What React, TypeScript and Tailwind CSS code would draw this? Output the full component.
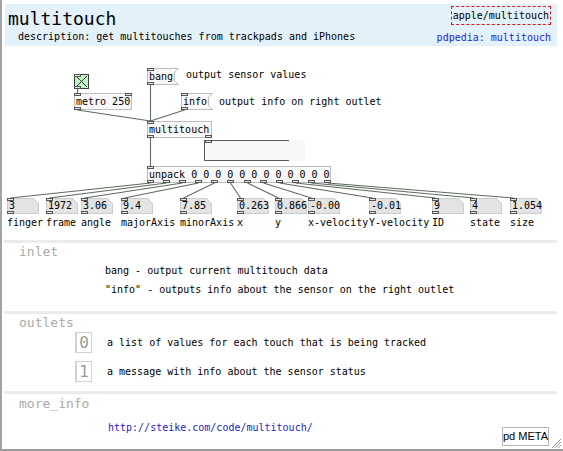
import React from "react";

const OY = 46;

type Kind = "obj" | "msg" | "atom" | "tgl";
type PdNode = {
  id: string;
  kind: Kind;
  x: number;
  y: number;
  w: number;
  h: number;
  text?: string;
  ins: number;
  outs: number;
};

const atomXs = [7, 46, 81, 121, 180, 237, 275, 308, 369, 432, 470, 510];
const atomVals = ["3", "1972", "3.06", "9.4", "7.85", "0.263", "0.866", "-0.00", "-0.01", "9", "4", "1.054"];
const atomLabels = [
  "finger",
  "frame",
  "angle",
  "majorAxis",
  "minorAxis",
  "x",
  "y",
  "x-velocity",
  "Y-velocity",
  "ID",
  "state",
  "size",
];

const nodes: PdNode[] = [
  { id: "tgl", kind: "tgl", x: 74, y: 74, w: 15, h: 15, ins: 1, outs: 1 },
  { id: "bang", kind: "msg", x: 147, y: 68, w: 32, h: 17, text: "bang", ins: 1, outs: 1 },
  { id: "metro", kind: "obj", x: 74, y: 93, w: 58, h: 17, text: "metro 250", ins: 2, outs: 1 },
  { id: "info", kind: "msg", x: 181, y: 93, w: 32, h: 17, text: "info", ins: 1, outs: 1 },
  { id: "mt", kind: "obj", x: 147, y: 121, w: 65, h: 17, text: "multitouch", ins: 1, outs: 2 },
  {
    id: "unpack",
    kind: "obj",
    x: 147,
    y: 166,
    w: 184,
    h: 17,
    text: "unpack 0 0 0 0 0 0 0 0 0 0 0 0",
    ins: 1,
    outs: 12,
  },
  ...atomXs.map((x, i) => ({
    id: `atom${i}`,
    kind: "atom" as Kind,
    x,
    y: 198,
    w: 32,
    h: 16,
    text: atomVals[i],
    ins: 1,
    outs: 1,
  })),
];

const byId = Object.fromEntries(nodes.map((n) => [n.id, n]));

const wires: [string, number, string, number][] = [
  ["tgl", 0, "metro", 0],
  ["metro", 0, "mt", 0],
  ["bang", 0, "mt", 0],
  ["info", 0, "mt", 0],
  ["mt", 0, "unpack", 0],
  ...atomXs.map((_, i) => ["unpack", i, `atom${i}`, 0] as [string, number, string, number]),
];

function portX(n: PdNode, i: number, count: number) {
  if (count <= 1) return n.x;
  return n.x + Math.round((i * (n.w - 7)) / (count - 1));
}

function boxShape(n: PdNode) {
  const { x, y, w, h } = n;
  const x2 = x + w - 0.5;
  const y2 = y + h - 0.5;
  const x1 = x + 0.5;
  const y1 = y + 0.5;
  if (n.kind === "msg") {
    return (
      <polygon
        key={n.id}
        points={`${x1},${y1} ${x2},${y1} ${x2 - 4},${y1 + 4} ${x2 - 4},${y2 - 4} ${x2},${y2} ${x1},${y2}`}
        fill="#f8f8f8"
        stroke="#bdbdbd"
      />
    );
  }
  if (n.kind === "atom") {
    return (
      <polygon
        key={n.id}
        points={`${x1},${y1} ${x2 - 5},${y1} ${x2},${y1 + 5} ${x2},${y2} ${x1},${y2}`}
        fill="#e3e3e3"
        stroke="#cdcdcd"
      />
    );
  }
  if (n.kind === "tgl") {
    return (
      <g key={n.id}>
        <rect x={x1} y={y1} width={w - 1} height={h - 1} fill="#c2f2c2" stroke="#3c3c3c" />
        <path
          d={`M${x + 2} ${y + 2} L${x + w - 2} ${y + h - 2} M${x + w - 2} ${y + 2} L${x + 2} ${y + h - 2}`}
          stroke="#2a3a2a"
          strokeWidth={1.2}
        />
      </g>
    );
  }
  return <rect key={n.id} x={x1} y={y1} width={w - 1} height={h - 1} fill="#f8f8f8" stroke="#bdbdbd" />;
}

function ports(n: PdNode) {
  const out: React.ReactNode[] = [];
  for (let i = 0; i < n.ins; i++) {
    out.push(
      <rect key={`${n.id}-i${i}`} x={portX(n, i, n.ins) + 0.5} y={n.y + 0.5} width={6} height={2} fill="#e6e6e6" stroke="#555" />
    );
  }
  for (let i = 0; i < n.outs; i++) {
    out.push(
      <rect
        key={`${n.id}-o${i}`}
        x={portX(n, i, n.outs) + 0.5}
        y={n.y + n.h - 2.5}
        width={6}
        height={2}
        fill="#e6e6e6"
        stroke="#555"
      />
    );
  }
  return out;
}

function Patch() {
  return (
    <div className="relative h-[194px]">
      <svg className="absolute left-0 top-0" width={563} height={194} viewBox={`0 ${OY} 563 194`}>
        <g stroke="#5d6b5d" strokeWidth={1.1} fill="none">
          {wires.map(([a, ai, b, bi], k) => {
            const from = byId[a];
            const to = byId[b];
            const x1 = portX(from, ai, from.outs) + 3.5;
            const y1 = from.y + from.h;
            const x2 = portX(to, bi, to.ins) + 3.5;
            const y2 = to.y;
            return <line key={k} x1={x1} y1={y1} x2={x2} y2={y2} />;
          })}
        </g>
        <g shapeRendering="crispEdges">
          {nodes.map((n) => boxShape(n))}
          <rect x={204} y={140} width={101} height={21} fill="#f8f8f8" />
          <path d="M289 140.5 H204.5 V160.5 H289" stroke="#5a5a5a" fill="none" />
          <rect x={205.5} y={140.5} width={6} height={2} fill="#e6e6e6" stroke="#555" />
          {nodes.map((n) => ports(n))}
        </g>
      </svg>

      {nodes
        .filter((n) => n.text)
        .map((n) => (
          <div
            key={n.id}
            className="absolute flex items-center whitespace-pre leading-none"
            style={{ left: n.x + 2, top: n.y - OY, height: n.h }}
          >
            {n.text}
          </div>
        ))}

      <div className="absolute left-[186px] top-[22px] h-[14px] leading-[14px] whitespace-pre">output sensor values</div>
      <div className="absolute left-[219px] top-[49px] h-[14px] leading-[14px] whitespace-pre">
        output info on right outlet
      </div>

      {atomXs.map((x, i) => (
        <div key={i} className="absolute top-[170px] h-[14px] leading-[14px] whitespace-pre" style={{ left: x }}>
          {atomLabels[i]}
        </div>
      ))}
    </div>
  );
}

function Bar() {
  return <div className="ml-[4px] h-[3px] w-[553px] bg-[#ebebeb]" />;
}

function OutletBox({ n }: { n: string }) {
  return (
    <div className="flex h-[21px] w-[17px] items-center justify-center border border-l-2 border-[#d2d2d2] text-[16px] leading-none text-[#9a9a9a]">
      {n}
    </div>
  );
}

export default function App() {
  return (
    <div className="relative h-[451px] w-[563px] overflow-hidden bg-white font-['DejaVu_Sans_Mono',monospace] text-[10px] text-black">
      <header className="ml-[5px] mt-[4px] flex h-[42px] w-[552px] justify-between bg-[#e3f1fb] pr-[6px]">
        <div className="pl-[3px] pt-[4px]">
          <h1 className="h-[22px] text-[18px] leading-[22px]">multitouch</h1>
          <p className="h-[14px] whitespace-pre pl-[10px] leading-[14px]">
            description: get multitouches from trackpads and iPhones
          </p>
        </div>
        <div className="flex flex-col items-end pt-[2px]">
          <div className="flex h-[19px] items-center border border-dashed border-[#e41414] px-[1px]">apple/multitouch</div>
          <div className="mt-[6px] h-[14px] leading-[14px] text-[#2424ee]">pdpedia: multitouch</div>
        </div>
      </header>

      <Patch />

      <Bar />
      <section className="h-[68px]">
        <div className="h-[18px] pl-[19px] text-[13px] leading-[18px] text-[#a9a9a9]">inlet</div>
        <div className="pl-[105px]">
          <p className="h-[19px] whitespace-pre leading-[19px]">bang - output current multitouch data</p>
          <p className="h-[19px] whitespace-pre leading-[19px]">"info" - outputs info about the sensor on the right outlet</p>
        </div>
      </section>

      <Bar />
      <section className="h-[77px]">
        <div className="h-[17px] pl-[19px] text-[13px] leading-[17px] text-[#a9a9a9]">outlets</div>
        <div className="mt-[1px] flex flex-col gap-[8px] pl-[75px]">
          <div className="flex items-center">
            <OutletBox n="0" />
            <span className="ml-[15px] whitespace-pre">a list of values for each touch that is being tracked</span>
          </div>
          <div className="flex items-center">
            <OutletBox n="1" />
            <span className="ml-[15px] whitespace-pre">a message with info about the sensor status</span>
          </div>
        </div>
      </section>

      <Bar />
      <section className="h-[55px]">
        <div className="h-[19px] pl-[19px] text-[13px] leading-[19px] text-[#a9a9a9]">more_info</div>
        <div className="flex items-start">
          <span className="ml-[108px] mt-[5px] h-[19px] leading-[19px] text-[#1c1cc8]">http://steike.com/code/multitouch/</span>
          <div className="ml-auto mr-[14px] mt-[14px] flex h-[19px] w-[47px] items-center justify-center whitespace-nowrap border border-[#b4b4b4] font-['Liberation_Sans',sans-serif] text-[11px] leading-none">
            pd META
          </div>
        </div>
      </section>

      <div className="absolute bottom-0 left-0 top-0 w-[2px] bg-[#a3a3a3]" />
      <div className="absolute bottom-0 left-0 h-[2px] w-full bg-[#9c9c9c]" />
      <svg className="absolute bottom-[2px] right-[1px]" width={12} height={12} viewBox="0 0 12 12">
        <path d="M11 2 L2 11 M11 5 L5 11 M11 8 L8 11" stroke="#9a9a9a" strokeWidth={1} />
      </svg>
    </div>
  );
}
